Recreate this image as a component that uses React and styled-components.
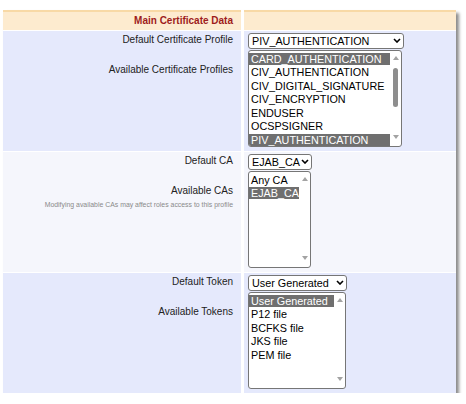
import React from "react";
import styled, { createGlobalStyle } from "styled-components";

const GlobalStyle = createGlobalStyle`
  html, body {
    margin: 0;
    background: #fff;
  }
  body {
    font-family: "Liberation Sans", Arial, sans-serif;
  }
`;

const BLUE = "#e5e9fc";
const PALE = "#f5f6fc";
const BEIGE = "#fdebcf";

const Page = styled.div`
  padding: 10px 0 0 3px;
`;

const Panel = styled.div`
  width: 453px;
  display: flex;
  flex-direction: column;
  gap: 1px;
  background: #fff;
  box-shadow: 3px 3px 3px rgba(0, 0, 0, 0.45);
`;

const Row = styled.div`
  display: grid;
  grid-template-columns: 238px 212px;
  column-gap: 3px;
  height: ${(p) => p.$h}px;
`;

const HeaderCell = styled.div`
  background: ${BEIGE};
  border-top: 2px solid #f8d9a6;
  text-align: right;
  padding-right: 8px;
  font-size: 10px;
  font-weight: bold;
  line-height: 18px;
  color: #9e1c1c;
`;

const LabelCell = styled.div`
  background: ${(p) => p.$bg};
  text-align: right;
  padding: 3px 8px 0 0;
`;

const Label = styled.div`
  font-size: 10px;
  line-height: 12px;
  color: #222;

  & + & {
    margin-top: 18px;
  }
`;

const Note = styled.div`
  font-size: 6.9px;
  line-height: 8px;
  color: #8a8a8a;
  margin-top: 4px;
`;

const ControlCell = styled.div`
  background: ${(p) => p.$bg};
  padding: 2px 0 0 4px;
  display: flex;
  flex-direction: column;
  align-items: flex-start;
  gap: 1.5px;
`;

const SelectBox = styled.div`
  width: ${(p) => p.$w}px;
  height: 15.5px;
  box-sizing: border-box;
  border: 1px solid #767676;
  border-radius: 3px;
  background: #fff;
  display: flex;
  align-items: center;
  justify-content: space-between;
  padding: 0 2px 0 3px;
  font-size: 10.8px;
  color: #000;
  white-space: nowrap;
  overflow: hidden;

  svg {
    flex-shrink: 0;
  }
`;

const ListBox = styled.div`
  width: ${(p) => p.$w}px;
  height: 97px;
  box-sizing: border-box;
  border: 1px solid #767676;
  border-radius: 3px;
  background: #fff;
  display: flex;
  overflow: hidden;
`;

const Options = styled.div`
  flex: 1;
  min-width: 0;
  padding-top: 1.5px;
`;

const Option = styled.div`
  height: 12px;
  line-height: 12px;
  margin-bottom: 1.6px;
  padding-left: 2px;
  font-size: 10.8px;
  white-space: nowrap;
  color: ${(p) => (p.$selected ? "#fff" : "#000")};
  background: ${(p) => (p.$selected ? "#6f6f6f" : "transparent")};
`;

const ScrollBar = styled.div`
  width: 11px;
  display: flex;
  flex-direction: column;
  align-items: center;
  padding-bottom: 2px;
`;

const ScrollArrow = styled.div`
  height: 14px;
  display: flex;
  align-items: center;
  justify-content: center;

  &::before {
    content: "";
    border-left: 3px solid transparent;
    border-right: 3px solid transparent;
    ${(p) =>
      p.$down
        ? "border-top: 4px solid #a3a3a3;"
        : "border-bottom: 4px solid #a3a3a3;"}
  }
`;

const ScrollTrack = styled.div`
  flex: 1;
  display: flex;
  flex-direction: column;
  align-items: center;
`;

const ScrollThumb = styled.div`
  width: 5px;
  height: 39px;
  margin-top: 3px;
  border-radius: 3px;
  background: #8e8e8e;
`;

function Chevron() {
  return (
    <svg width="8" height="5" viewBox="0 0 8 5">
      <polyline points="1,1 4,4 7,1" fill="none" stroke="#000" strokeWidth="1.6" />
    </svg>
  );
}

function Dropdown({ value, width }) {
  return (
    <SelectBox $w={width}>
      <span>{value}</span>
      <Chevron />
    </SelectBox>
  );
}

function MultiList({ items, selected, width, thumb }) {
  return (
    <ListBox $w={width}>
      <Options>
        {items.map((it) => (
          <Option key={it} $selected={selected.includes(it)}>
            {it}
          </Option>
        ))}
      </Options>
      <ScrollBar>
        <ScrollArrow />
        <ScrollTrack>{thumb && <ScrollThumb />}</ScrollTrack>
        <ScrollArrow $down />
      </ScrollBar>
    </ListBox>
  );
}

const sections = [
  {
    bg: BLUE,
    defaultLabel: "Default Certificate Profile",
    listLabel: "Available Certificate Profiles",
    value: "PIV_AUTHENTICATION",
    selectWidth: 156,
    listWidth: 154,
    thumb: true,
    items: [
      "CARD_AUTHENTICATION",
      "CIV_AUTHENTICATION",
      "CIV_DIGITAL_SIGNATURE",
      "CIV_ENCRYPTION",
      "ENDUSER",
      "OCSPSIGNER",
      "PIV_AUTHENTICATION",
    ],
    selected: ["CARD_AUTHENTICATION", "PIV_AUTHENTICATION"],
  },
  {
    bg: PALE,
    defaultLabel: "Default CA",
    listLabel: "Available CAs",
    note: "Modifying available CAs may affect roles access to this profile",
    value: "EJAB_CA",
    selectWidth: 64,
    listWidth: 63,
    items: ["Any CA", "EJAB_CA"],
    selected: ["EJAB_CA"],
  },
  {
    bg: BLUE,
    defaultLabel: "Default Token",
    listLabel: "Available Tokens",
    value: "User Generated",
    selectWidth: 99,
    listWidth: 98,
    items: ["User Generated", "P12 file", "BCFKS file", "JKS file", "PEM file"],
    selected: ["User Generated"],
  },
];

export default function App() {
  return (
    <Page>
      <GlobalStyle />
      <Panel>
        <Row $h={20}>
          <HeaderCell>Main Certificate Data</HeaderCell>
          <HeaderCell />
        </Row>
        {sections.map((s) => (
          <Row key={s.defaultLabel} $h={120}>
            <LabelCell $bg={s.bg}>
              <Label>{s.defaultLabel}</Label>
              <Label>{s.listLabel}</Label>
              {s.note && <Note>{s.note}</Note>}
            </LabelCell>
            <ControlCell $bg={s.bg}>
              <Dropdown value={s.value} width={s.selectWidth} />
              <MultiList
                items={s.items}
                selected={s.selected}
                width={s.listWidth}
                thumb={s.thumb}
              />
            </ControlCell>
          </Row>
        ))}
      </Panel>
    </Page>
  );
}
